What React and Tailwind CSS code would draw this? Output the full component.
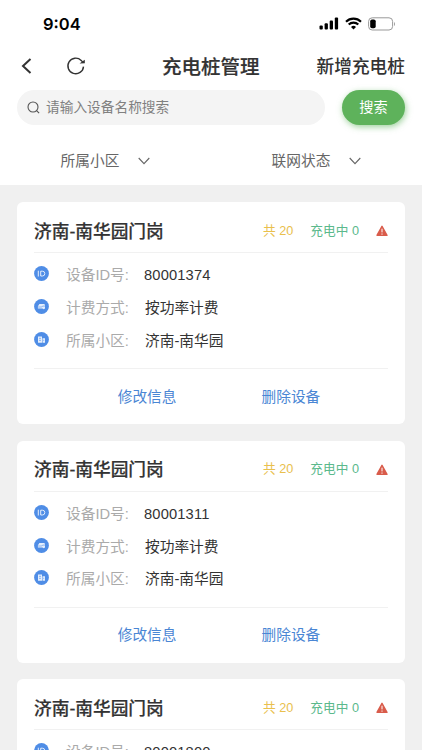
const devices = [
  { name: "济南-南华园门岗", id: "80001374" },
  { name: "济南-南华园门岗", id: "80001311" },
  { name: "济南-南华园门岗", id: "80001800" },
];

function StatusBar() {
  return (
    <div className="flex h-[47px] items-center pl-[43px] pr-[26px]">
      <span className="text-[16.500px] leading-[20px] font-semibold text-black font-['Inter','Liberation_Sans',sans-serif]">9:04</span>
      <div className="ml-auto flex items-center">
        <svg width="20" height="13" viewBox="0 0 20 13" fill="#000">
          <rect x="0.5" y="8.500" width="3.3" height="4" rx="1" />
          <rect x="5.6" y="6.300" width="3.3" height="6.200" rx="1" />
          <rect x="10.7" y="3.6" width="3.3" height="8.900" rx="1" />
          <rect x="15.8" y="0.5" width="3.3" height="12" rx="1" />
        </svg>
        <svg className="ml-[6px]" width="17" height="13" viewBox="0 0 17 13" fill="none" stroke="#000" strokeWidth="2.1">
          <path d="M1 4.7a10.6 10.6 0 0 1 15 0" />
          <path d="M3.7 7.6a6.8 6.8 0 0 1 9.6 0" />
          <path d="M8.5 12.4 6 9.9a3.6 3.6 0 0 1 5 0z" fill="#000" stroke="none" />
        </svg>
        <svg className="ml-[6px]" width="28" height="14" viewBox="0 0 28 14">
          <rect x="0.6" y="0.8" width="24" height="12.2" rx="3.6" fill="none" stroke="#999" />
          <rect x="2.2" y="2.5" width="5.5" height="8.8" rx="1.8" />
          <path d="M26 5v4c1.3-.5 1.3-3.5 0-4z" fill="#999" />
        </svg>
      </div>
    </div>
  );
}

function Chevron() {
  return (
    <svg width="12" height="8" viewBox="0 0 12 8" fill="none" stroke="#666" strokeWidth="1.100">
      <path d="m.7 1 5.3 5.600L11.300 1" />
    </svg>
  );
}

function Filter({ label }) {
  return (
    <div className="flex w-[211px] items-center justify-center">
      <span className="text-[14.7px] leading-[20px] text-[#666]">{label}</span>
      <span className="ml-[19px]"><Chevron /></span>
    </div>
  );
}

function IdIcon() {
  return (
    <svg width="15" height="15" viewBox="0 0 15 15">
      <circle cx="7.500" cy="7.500" r="7.400" fill="#4f8de6" />
      <path d="M4.300 4.700v5.800M6.700 5.200v4.800h1.700a2.400 2.400 0 0 0 0-4.800z" fill="none" stroke="#e4eefc" strokeWidth="1" />
    </svg>
  );
}

function BillingIcon() {
  return (
    <svg width="15" height="15" viewBox="0 0 15 15">
      <circle cx="7.500" cy="7.500" r="7.400" fill="#4f8de6" />
      <path d="M5.400 5h5l.6 1.200v3.200l-1.300.800-1.300-.800H3.900V7.200z" fill="#e4eefc" />
      <path d="M4 8h3.800l.800-.900H11" fill="none" stroke="#4f8de6" strokeWidth=".6" />
    </svg>
  );
}

function BuildingIcon() {
  return (
    <svg width="15" height="15" viewBox="0 0 15 15">
      <circle cx="7.500" cy="7.500" r="7.400" fill="#4f8de6" />
      <path d="M4 4.500h4v6.300H4zM8.500 6.200H11v4.600H8.500z" fill="#e4eefc" />
      <path d="M5.100 6.300h1.800M5.100 8.300h1.800M9.300 8.300h.9" stroke="#4f8de6" strokeWidth=".7" />
    </svg>
  );
}

function Row({ icon, label, children }) {
  return (
    <div className="flex h-[32.700px] items-center">
      <span className="-mt-[3px]">{icon}</span>
      <span className="ml-[17px] w-[79px] text-[14.7px] leading-[22px] text-[#aaa]">{label}</span>
      <span className="text-[14.700px] leading-[22px] text-[#333]">{children}</span>
    </div>
  );
}

function DeviceCard({ device }) {
  return (
    <section className="h-[222px] shrink-0 rounded-[6px] bg-white px-[17px]">
      <header className="flex h-[51px] items-center border-b border-[#f1f1f1] pt-[9px]">
        <h2 className="text-[17.700px] leading-[26px] font-medium text-[#333] [-webkit-text-stroke:0.2px_#333]">{device.name}</h2>
        <span className="ml-auto text-[12.700px] text-[#e9c04d]">共 20</span>
        <span className="ml-[17px] text-[12.700px] text-[#5bb98c]">充电中 0</span>
        <svg className="-mt-[1px] ml-[17px]" width="12" height="12" viewBox="0 0 12 12">
          <path d="M6 1.300 11 10.300H1z" fill="#d95c4b" stroke="#d95c4b" strokeWidth="1.400" strokeLinejoin="round" />
          <path d="M6 3.700v3.700M6 8.500v1.200" stroke="#fff" strokeWidth="1" />
        </svg>
      </header>
      <div className="h-[116px] border-b border-[#f1f1f1] pt-[6px]">
        <Row icon={<IdIcon />} label="设备ID号:">
          <span className="-ml-[1px] tracking-[0.150px]">{device.id}</span>
        </Row>
        <Row icon={<BillingIcon />} label="计费方式:">按功率计费</Row>
        <Row icon={<BuildingIcon />} label="所属小区:">济南-南华园</Row>
      </div>
      <footer className="flex h-[55px] items-center justify-center gap-[85px] pl-[16px] text-[14.700px] leading-[22px] text-[#4a86d4]">
        <button>修改信息</button>
        <button>删除设备</button>
      </footer>
    </section>
  );
}

export default function App() {
  return (
    <div className="flex h-[750px] w-[422px] flex-col overflow-hidden bg-[#f0f0f0] font-['Liberation_Sans','Noto_Sans_CJK_SC',sans-serif]">
      <div className="h-[185px] shrink-0 bg-white">
        <StatusBar />
        <div className="flex h-[38px] items-center pl-[21px] pr-[17px]">
          <svg width="12" height="18" viewBox="0 0 12 18" fill="none" stroke="#333" strokeWidth="2">
            <path d="M9.500 2 2 9l7.500 7" />
          </svg>
          <svg className="ml-[33px]" width="20" height="20" viewBox="0 0 20 20" fill="none" stroke="#333" strokeWidth="1.400">
            <path d="M17.500 10.600a7.800 7.800 0 1 1-2.300-6.200l2 2.200" />
            <path d="M18.800 3.800v3.400l-5.200.200 2.600-2z" fill="#333" stroke="none" />
          </svg>
          <h1 className="ml-[76px] pt-[1px] text-[19.500px] leading-[28px] font-medium text-[#333] [-webkit-text-stroke:0.2px_#333]">充电桩管理</h1>
          <span className="ml-auto pt-[1px] text-[17.700px] leading-[26px] font-medium text-[#333]">新增充电桩</span>
        </div>
        <div className="mt-[5px] flex items-center px-[17px]">
          <div className="flex h-[35px] w-[308px] items-center rounded-full bg-[#f4f4f4] pl-[10px]">
            <svg width="13" height="13" viewBox="0 0 13 13" fill="none" stroke="#555" strokeWidth="1.100">
              <circle cx="6" cy="6" r="5" />
              <path d="m9.600 9.600 2.500 2.500" />
            </svg>
            <span className="ml-[6px] text-[13.700px] leading-[20px] text-[#808080]">请输入设备名称搜索</span>
          </div>
          <button className="ml-[17px] h-[35px] w-[63px] rounded-full bg-[#5eb25b] text-[14.200px] text-white shadow-[1px_2px_6px_rgba(94,178,91,0.600)]">搜索</button>
        </div>
        <div className="mt-[26px] flex h-[20px]">
          <Filter label="所属小区" />
          <Filter label="联网状态" />
        </div>
      </div>
      <main className="flex flex-col gap-[16.500px] px-[17px] pt-[17px]">
        {devices.map((d) => <DeviceCard key={d.id} device={d} />)}
      </main>
    </div>
  );
}
